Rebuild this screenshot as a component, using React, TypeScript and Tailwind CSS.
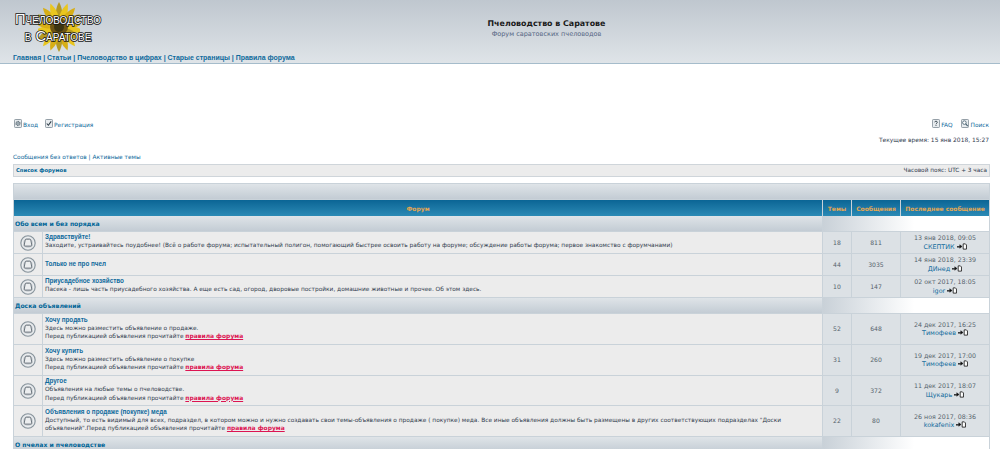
import React from 'react';

const font = 'font-["DejaVu_Sans",Verdana,sans-serif]';
const narrow = 'font-["Liberation_Sans",Arial,sans-serif]';

function Sunflower() {
  const petals = Array.from({ length: 18 }, (_, i) => (i * 360) / 18);
  return (
    <svg width="42" height="52" viewBox="0 0 42 52" className="absolute left-[25px] top-0">
      <g transform="translate(21 27)">
        {petals.map((a, i) => (
          <path
            key={a}
            d="M0 0 C-5 -8 -4 -18 0 -25 C4 -18 5 -8 0 0Z"
            fill={i % 3 === 0 ? '#b59a22' : i % 2 ? '#e9c61f' : '#d7ae16'}
            transform={`rotate(${a})`}
          />
        ))}
        <circle r="9" fill="#6e5514" />
        <circle r="5" fill="#3d3512" />
      </g>
    </svg>
  );
}

function ForumIcon() {
  return (
    <svg width="16" height="16" viewBox="0 0 16 16">
      <circle cx="8" cy="8" r="7.2" fill="#dfe3e6" stroke="#87939b" strokeWidth="1.1" />
      <circle cx="8" cy="8" r="5.5" fill="#cdd2d6" stroke="#f5f6f7" strokeWidth="0.8" />
      <path d="M6.2 4.2h3.6q0.8 0 1 0.8l1 5.2q0.2 0.9-0.8 0.9H5q-1 0-0.8-0.9l1-5.2q0.2-0.8 1-0.8z" fill="#eceeef" stroke="#5d6870" strokeWidth="0.9" />
    </svg>
  );
}

function LastPostIcon() {
  return (
    <svg width="10" height="7" viewBox="0 0 11 7" className="inline-block ml-[2px] align-[-1px]">
      <path d="M0 3.5h3V1.6l2.6 1.9L3 5.4V4.2H0z" fill="#111" stroke="#111" strokeWidth="0.5" />
      <path d="M6.8 0.6h2.4l1.2 1.2v4.6H6.8z" fill="#fff" stroke="#111" strokeWidth="0.9" />
    </svg>
  );
}

function BoxIcon({ kind }: { kind: 'login' | 'reg' | 'faq' | 'search' }) {
  return (
    <svg width="8" height="9" viewBox="0 0 9 10" className="inline-block mr-[1px] align-[-1px]">
      <rect x="0.5" y="0.5" width="8" height="9" rx="1" fill="#e8ecef" stroke="#6d7c86" strokeWidth="0.8" />
      {kind === 'login' && <circle cx="4.5" cy="5" r="2.4" fill="#9aa7af" stroke="#46545e" strokeWidth="1" strokeDasharray="1 0.7" />}
      {kind === 'reg' && <path d="M2 5l1.8 2L7 2.6" fill="none" stroke="#2f3d47" strokeWidth="1.2" />}
      {kind === 'faq' && <path d="M3 3.6c0-1.6 3-1.6 3 0 0 1.1-1.5 1-1.5 2.3M4.5 6.8v1" fill="none" stroke="#2f3d47" strokeWidth="1" />}
      {kind === 'search' && (
        <>
          <circle cx="3.8" cy="4" r="2" fill="#fff" stroke="#3f5a6b" strokeWidth="0.9" />
          <path d="M5.3 5.5 7.6 8" stroke="#3f5a6b" strokeWidth="1.2" />
        </>
      )}
    </svg>
  );
}

const cols = 'grid grid-cols-[28px_minmax(0,1fr)_28px_48px_88px] gap-x-px';

function Rules() {
  return <a className="font-bold underline text-[#dc1452] text-[5.96px]">правила форума</a>;
}

type Row = {
  h: string;
  title: string;
  lines: React.ReactNode[];
  topics: number;
  posts: number;
  date: string;
  user: string;
};

function Category({ name }: { name: string }) {
  return (
    <div className={`${cols} h-[15px] mb-px shrink-0`}>
      <div className="col-span-2 bg-linear-to-b from-[#dfe4e8] to-[#c3ccd4] flex items-center px-[1px]">
        <span className="text-[6.1px] font-bold text-[#006597]">{name}</span>
      </div>
      <div className="col-span-3 bg-linear-to-r from-[#c9d1d8] from-0% to-white to-55%" />
    </div>
  );
}

function ForumRow({ r }: { r: Row }) {
  return (
    <div className={`${cols} ${r.h} mb-px shrink-0`}>
      <div className="bg-[#ececec] flex items-center justify-center">
        <ForumIcon />
      </div>
      <div className="bg-[#ececec] px-[2px] pb-[3px] flex flex-col justify-center leading-[8.4px] text-[5.85px] text-[#323d4f]">
        <div className={`${narrow} font-bold text-[#0f6a9c] text-[6.3px] leading-[9px]`}>{r.title}</div>
        {r.lines.map((l, i) => (
          <div key={i} className="whitespace-nowrap">{l}</div>
        ))}
      </div>
      <div className="bg-[#dce1e5] flex items-center justify-center text-[6.1px] text-[#56636d]">{r.topics}</div>
      <div className="bg-[#dce1e5] flex items-center justify-center text-[6.1px] text-[#56636d]">{r.posts}</div>
      <div className="bg-[#dce1e5] flex flex-col items-center justify-center text-[6.3px] leading-[8.5px] text-[#56636d]">
        <div>{r.date}</div>
        <div className="whitespace-nowrap">
          <span className="text-[#0f6a9c] text-[6.4px]">{r.user}</span>
          <LastPostIcon />
        </div>
      </div>
    </div>
  );
}

const prefix = 'Перед публикацией объявления прочитайте ';

const first: Row[] = [
  {
    h: 'h-[21px]',
    title: 'Здравствуйте!',
    lines: [
      'Заходите, устраивайтесь поудобнее! (Всё о работе форума; испытательный полигон, помогающий быстрее освоить работу на форуме; обсуждение работы форума; первое знакомство с форумчанами)',
    ],
    topics: 18,
    posts: 811,
    date: '13 янв 2018, 09:05',
    user: 'СКЕПТИК',
  },
  {
    h: 'h-[21px]',
    title: 'Только не про пчел',
    lines: [],
    topics: 44,
    posts: 3035,
    date: '14 янв 2018, 23:39',
    user: 'ДИнед',
  },
  {
    h: 'h-[21px]',
    title: 'Приусадебное хозяйство',
    lines: [
      'Пасека - лишь часть приусадебного хозяйства. А еще есть сад, огород, дворовые постройки, домашние животные и прочее. Об этом здесь.',
    ],
    topics: 10,
    posts: 147,
    date: '02 окт 2017, 18:05',
    user: 'igor',
  },
];

const second: Row[] = [
  {
    h: 'h-[30px]',
    title: 'Хочу продать',
    lines: ['Здесь можно разместить объявление о продаже.', <>{prefix}<Rules /></>],
    topics: 52,
    posts: 648,
    date: '24 дек 2017, 16:25',
    user: 'Тимофеев',
  },
  {
    h: 'h-[30px]',
    title: 'Хочу купить',
    lines: ['Здесь можно разместить объявление о покупке', <>{prefix}<Rules /></>],
    topics: 31,
    posts: 260,
    date: '19 дек 2017, 17:00',
    user: 'Тимофеев',
  },
  {
    h: 'h-[29px]',
    title: 'Другое',
    lines: ['Объявления на любые темы о пчеловодстве.', <>{prefix}<Rules /></>],
    topics: 9,
    posts: 372,
    date: '11 дек 2017, 18:07',
    user: 'Щукарь',
  },
  {
    h: 'h-[30px]',
    title: 'Объявления о продаже (покупке) меда',
    lines: [
      'Доступный, то есть видимый для всех, подраздел, в котором можно и нужно создавать свои темы-объявления о продаже ( покупке) меда. Все иные объявления должны быть размещены в других соответствующих подразделах "Доски',
      <>объявлений".{prefix}<Rules /></>,
    ],
    topics: 22,
    posts: 80,
    date: '26 ноя 2017, 08:36',
    user: 'kokafenix',
  },
];

export default function App() {
  return (
    <div className={`${font} h-[449px] overflow-hidden bg-white text-[#323d4f] flex flex-col`}>
      <header className="h-[64px] shrink-0 border-b border-[#a5bccb] bg-linear-to-b from-[#bfc7cf] to-[#dfe4e8] flex flex-col pl-[13px]">
        <div className="flex h-[52px] shrink-0">
          <div className="relative w-[90px] h-[52px] shrink-0">
            <Sunflower />
            <div className={`${narrow} absolute inset-0 pt-[11px] text-center text-[14.7px] leading-[16.5px] text-white [font-variant-caps:small-caps] [-webkit-text-stroke:1.6px_#151515] [paint-order:stroke_fill] whitespace-nowrap`}>
              <div>Пчеловодство</div>
              <div>в Саратове</div>
            </div>
          </div>
          <div className="flex-1 pr-[10px] pt-[18px] text-center">
            <div className="text-[7.9px] leading-[12px] font-bold text-[#1a1a1a]">Пчеловодство в Саратове</div>
            <div className="text-[6.5px] leading-[8px] text-[#536482]">Форум саратовских пчеловодов</div>
          </div>
        </div>
        <nav className={`${narrow} mt-[1px] text-[6.96px] leading-[10px] font-bold text-[#0f6a9c]`}>
          Главная | Статьи | Пчеловодство в цифрах | Старые страницы | Правила форума
        </nav>
      </header>

      <div className="mt-[55px] ml-[14px] mr-[11px] flex justify-between text-[5.85px] leading-[12px] text-[#0f6a9c] shrink-0">
        <div className="flex gap-[7px]">
          <span><BoxIcon kind="login" />Вход</span>
          <span><BoxIcon kind="reg" />Регистрация</span>
        </div>
        <div className="flex gap-[9px]">
          <span><BoxIcon kind="faq" />FAQ</span>
          <span><BoxIcon kind="search" />Поиск</span>
        </div>
      </div>

      <div className="mt-[4px] mr-[11px] text-right text-[5.93px] leading-[9px] text-[#323d4f] shrink-0">
        Текущее время: 15 янв 2018, 15:27
      </div>

      <div className="mt-[9px] ml-[13px] text-[5.87px] leading-[9px] text-[#0f6a9c] shrink-0">
        Сообщения без ответов | Активные темы
      </div>

      <div className="mt-[2px] ml-[13px] mr-[10px] h-[13px] shrink-0 bg-[#ececec] border border-[#cfd5da] flex items-center justify-between px-[2px] text-[5.78px]">
        <span className="font-bold text-[#006597] text-[5.25px]">Список форумов</span>
        <span className="text-[#323d4f]">Часовой пояс: UTC + 3 часа</span>
      </div>

      <div className="mt-[6px] ml-[13px] mr-[10px] border-x border-t border-[#c9d2d9] bg-[#c9d2d9] flex flex-col shrink-0">
        <div className="h-[15px] bg-linear-to-b from-[#dfe4e8] to-[#c3ccd4] mb-px shrink-0" />
        <div className={`${cols} h-[16px] shrink-0 text-[6px] font-bold text-[#e3a653]`}>
          <div className="col-span-2 bg-linear-to-b from-[#0a6595] to-[#2a8ab5] flex items-center justify-center">Форум</div>
          <div className="bg-linear-to-b from-[#0a6595] to-[#2a8ab5] flex items-center justify-center">Темы</div>
          <div className="bg-linear-to-b from-[#0a6595] to-[#2a8ab5] flex items-center justify-center">Сообщения</div>
          <div className="bg-linear-to-b from-[#0a6595] to-[#2a8ab5] flex items-center justify-center whitespace-nowrap">Последнее сообщение</div>
        </div>
        <Category name="Обо всем и без порядка" />
        {first.map((r) => (
          <ForumRow key={r.title} r={r} />
        ))}
        <Category name="Доска объявлений" />
        {second.map((r) => (
          <ForumRow key={r.title} r={r} />
        ))}
        <Category name="О пчелах и пчеловодстве" />
      </div>
    </div>
  );
}
